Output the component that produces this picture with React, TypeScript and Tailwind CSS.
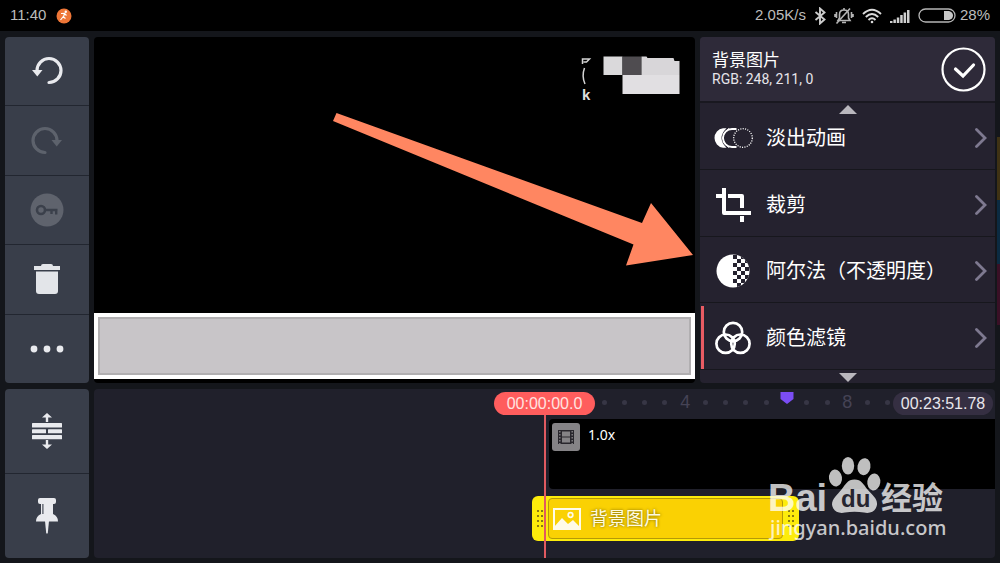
const effects = [
  { label: "淡出动画", icon: FadeIcon, active: false },
  { label: "裁剪", icon: CropIcon, active: false },
  { label: "阿尔法（不透明度）", icon: AlphaIcon, active: false },
  { label: "颜色滤镜", icon: FilterIcon, active: true },
];

const ticks = ["", "", "", "", "4", "", "", "", "", "marker", "", "", "8", "", ""];

const editTools = [
  { label: "Undo", icon: UndoIcon, disabled: false },
  { label: "Redo", icon: RedoIcon, disabled: true },
  { label: "Keyframe", icon: KeyIcon, disabled: true },
  { label: "Delete", icon: TrashIcon, disabled: false },
  { label: "More", icon: MoreIcon, disabled: false },
];

const trackTools = [
  { label: "Expand tracks", icon: ExpandIcon, disabled: false },
  { label: "Pin", icon: PinIcon, disabled: false },
];

function UndoIcon() {
  return (
    <svg width="32" height="32" viewBox="0 0 32 32" fill="none">
      <path d="M18 27.5A12 12 0 1 0 6 15.5" stroke="#e9eaee" strokeWidth="3.2" strokeLinecap="round" />
      <path d="M1 15h10.500l-5.200 6.500z" fill="#e9eaee" />
    </svg>
  );
}

function RedoIcon() {
  return (
    <svg width="32" height="32" viewBox="0 0 32 32" fill="none">
      <path d="M14 27.500A12 12 0 1 1 26 15.500" stroke="#5d626c" strokeWidth="3.200" strokeLinecap="round" />
      <path d="M31 15H20.500l5.200 6.500z" fill="#5d626c" />
    </svg>
  );
}

function KeyIcon() {
  return (
    <svg width="34" height="34" viewBox="0 0 34 34" fill="none">
      <circle cx="17" cy="17" r="16.5" fill="#5f636d" />
      <circle cx="11" cy="17" r="4" stroke="#3b404b" strokeWidth="2.6" />
      <path d="M15 17h12.500M26.200 17v4.500M21.500 17v4" stroke="#3b404b" strokeWidth="2.400" />
    </svg>
  );
}

function TrashIcon() {
  return (
    <svg width="32" height="32" viewBox="0 0 32 32" fill="#e3e5e9">
      <path d="M3 3h7q0-2 2-2h8q2 0 2 2h7v4H3z" />
      <path d="M5 8.500h22V28q0 3-3 3H8q-3 0-3-3z" />
    </svg>
  );
}

function MoreIcon() {
  return (
    <svg width="34" height="8" viewBox="0 0 34 8" fill="#e9eaee">
      <circle cx="4" cy="4" r="3.4" />
      <circle cx="17" cy="4" r="3.4" />
      <circle cx="30" cy="4" r="3.4" />
    </svg>
  );
}

function ExpandIcon() {
  return (
    <svg width="30" height="36" viewBox="0 0 30 36" fill="#e9eaee">
      <path d="M15 0l5 4.500h-3.800V9h-2.400V4.500H10zM15 36l5-4.500h-3.800V27h-2.400v4.500H10z" />
      <rect y="10" width="30" height="4.500" rx=".5" />
      <rect y="16.200" width="14" height="4" rx=".5" />
      <rect x="16" y="16.200" width="14" height="4" rx=".5" />
      <rect y="22" width="30" height="4.200" rx=".5" />
    </svg>
  );
}

function PinIcon() {
  return (
    <svg width="24" height="36" viewBox="0 0 24 36" fill="#e9eaee">
      <rect x="3" width="18" height="6" rx="2" />
      <path d="M6 5h12v11q5 2 5 7.500H1Q1 18 6 16z" />
      <path d="M10 23h4l-1.200 12q-.8 1.500-1.600 0z" />
      <path d="M7.900 6v10" stroke="#393e4a" strokeWidth="1.100" />
    </svg>
  );
}

function FadeIcon() {
  return (
    <svg width="40" height="22" viewBox="0 0 40 22" fill="none">
      <path d="M13.500 1.200H10A9.900 9.900 0 0 0 10 20.800H13.500Q3.500 11 13.500 1.200z" fill="#fff" />
      <path d="M16 1.200Q3.500 11 16 20.800" stroke="#fff" strokeWidth="1" />
      <path d="M23.500 2H19A9 9 0 0 0 19 20H23.500" stroke="#fff" strokeWidth="1.900" />
      <circle cx="30" cy="11" r="9.300" stroke="#fff" strokeWidth="1.300" strokeDasharray="1.100 1.300" />
    </svg>
  );
}

function CropIcon() {
  return (
    <svg width="36" height="36" viewBox="0 0 36 36" fill="none" stroke="#fff" strokeWidth="4">
      <path d="M9 1v25h27" strokeLinejoin="round" />
      <path d="M1 9h6M13 9h14v12M27 29v6" strokeLinejoin="round" />
    </svg>
  );
}

function AlphaIcon() {
  return (
    <svg width="34" height="34" viewBox="0 0 34 34">
      <clipPath id="disc">
        <circle cx="17" cy="17" r="16.500" />
      </clipPath>
      <g clipPath="url(#disc)">
        <rect width="34" height="34" fill="#fff" />
        <path
          d="M17 1h4v4h-4zM21 5h4v4h-4zM17 9h4v4h-4zM21 13h4v4h-4zM17 17h4v4h-4zM21 21h4v4h-4zM17 25h4v4h-4zM21 29h4v4h-4zM25 1h4v4h-4zM29 5h4v4h-4zM25 9h4v4h-4zM29 13h4v4h-4zM25 17h4v4h-4zM29 21h4v4h-4zM25 25h4v4h-4z"
          fill="#25222f"
        />
      </g>
    </svg>
  );
}

function FilterIcon() {
  return (
    <svg width="36" height="34" viewBox="0 0 36 34" fill="none" stroke="#fff" strokeWidth="2.700">
      <circle cx="18" cy="11" r="9.200" />
      <circle cx="10.600" cy="22.700" r="9.200" />
      <circle cx="25.400" cy="22.700" r="9.200" />
    </svg>
  );
}

type Tool = { label: string; icon: () => React.JSX.Element; disabled: boolean };

function Toolbar({ tools }: { tools: Tool[] }) {
  return (
    <div className="flex w-[84px] shrink-0 flex-col divide-y divide-[#222630] overflow-hidden rounded bg-[#393e4a]">
      {tools.map(({ label, icon: Icon, disabled }) => (
        <button
          key={label}
          aria-label={label}
          disabled={disabled}
          className="flex min-h-16 flex-1 items-center justify-center"
        >
          <Icon />
        </button>
      ))}
    </div>
  );
}

function StatusBar() {
  return (
    <header className="flex h-[31px] items-center justify-between bg-black px-[10px] text-[15px] text-[#bcbcbc]">
      <div className="flex items-center gap-[10px]">
        <span>11:40</span>
        <svg width="16" height="16" viewBox="0 0 16 16">
          <circle cx="8" cy="8" r="7.500" fill="#ee7637" />
          <circle cx="9.800" cy="3.800" r="1.200" fill="#fff" />
          <path d="M5 5.500l3.500-.2L7.500 9l2 1.500M8.500 5.500l2 2M7.300 8.500L4.500 12" stroke="#fff" strokeWidth="1.200" fill="none" />
        </svg>
      </div>
      <div className="flex items-center gap-2">
        <span>2.05K/s</span>
        <svg width="12" height="18" viewBox="0 0 12 18" fill="none" stroke="#cccccc" strokeWidth="1.900">
          <path d="M1.500 5l9 7.500L6 16.500v-15l4.500 4L1.500 13" />
        </svg>
        <svg width="20" height="18" viewBox="0 0 20 18" fill="none" stroke="#b5b5b5" strokeWidth="1.600">
          <path d="M4 13.500h12l-1.500-2.500V7.500Q14.500 3 10 3T5.500 7.500V11zM8 15.500h4M10 1v2M2.500 5v6M17.500 5v6M1 7v3M19 7v3" />
          <path d="M2.500 16.500L16 1.500" />
        </svg>
        <svg width="20" height="16" viewBox="0 0 20 16" fill="none" stroke="#dadada" strokeWidth="1.900">
          <path d="M1 6Q10-2.500 19 6M3.800 9Q10 3 16.200 9M6.500 12Q10 8.500 13.500 12" />
          <circle cx="10" cy="14" r="1.300" fill="#dadada" stroke="none" />
        </svg>
        <svg width="20" height="14" viewBox="0 0 20 14" fill="#d0d0d0">
          <path d="M0 12h2.500v2H0zM3.400 10.500h2.500V14H3.400zM6.800 8.500h2.500V14H6.800zM10.200 6h2.500v8h-2.500zM13.600 3.500h2.500V14h-2.500zM17 1h2.500v13H17z" />
        </svg>
        <div className="flex items-center gap-1">
          <svg width="38" height="15" viewBox="0 0 38 15">
            <rect x="1" y="1" width="36" height="13" rx="6.500" fill="none" stroke="#b5b5b5" strokeWidth="1.300" />
            <path d="M26 3h5q4 1 4 4.500t-4 4.500h-5z" fill="#c9c9c9" />
          </svg>
          <span>28%</span>
        </div>
      </div>
    </header>
  );
}

function Preview() {
  return (
    <section className="relative flex min-w-0 flex-1 flex-col justify-end overflow-hidden rounded bg-black pb-1">
      <div className="h-[66px] border-4 border-white bg-[#c8c5c8]">
        <div className="h-full border-2 border-[#b1afb1]" />
      </div>
      <svg className="absolute inset-0 h-full w-full" viewBox="0 0 601 346" preserveAspectRatio="none">
        <path d="M509.500 19.500h19v18.500h-19z" fill="#dad9db" />
        <path d="M528.500 19.500h19v18.500h-19z" fill="#4f4c50" />
        <path d="M547.500 19.500h5l1 1.500h26l1 3h5V38h-38z" fill="#d8d6d9" />
        <path d="M528.500 38h57v19h-57z" fill="#e1dfe2" />
        <path d="M488.500 27v-5h7l-3 3h-3M490.500 31q-3 8 .5 16" stroke="#d4d4d4" strokeWidth="1.500" fill="none" />
        <text x="488" y="63" fontSize="15" fontWeight="bold" fill="#ddd">
          k
        </text>
        <path d="M242.500 76L548 186l9-20 42 52-67 10.500 7.500-21L239 84z" fill="#ff8661" />
      </svg>
    </section>
  );
}

function EffectPanel() {
  return (
    <aside className="flex w-[295px] shrink-0 flex-col overflow-hidden rounded bg-[#25222f] text-white">
      <div className="flex h-[66px] items-center justify-between border-b-2 border-[#191820] bg-[#2e2a39] pl-3 pr-[9px]">
        <div>
          <h1 className="text-[17px] leading-5">背景图片</h1>
          <p className="font-['Roboto'] text-[14px] leading-4 text-[#e6e4ea]">RGB: 248, 211, 0</p>
        </div>
        <button aria-label="Done">
          <svg width="45" height="45" viewBox="0 0 45 45" fill="none" stroke="#fff">
            <circle cx="22.500" cy="22.500" r="21" strokeWidth="2.200" />
            <path d="M14.500 22l7.500 7L32.500 18" strokeWidth="3.200" strokeLinecap="round" />
          </svg>
        </button>
      </div>
      <ul className="relative flex flex-1 flex-col">
        <svg className="absolute left-1/2 top-[2px] -translate-x-1/2" width="18" height="9" viewBox="0 0 18 9">
          <path d="M9 0l9 9H0z" fill="#b9b7bd" />
        </svg>
        {effects.map(({ label, icon: Icon, active }) => (
          <li
            key={label}
            className={`flex flex-1 border-b border-b-[#17171d] ${active ? "bg-[linear-gradient(#e95c63,#e95c63)] bg-[length:3px_63px] bg-[position:1px_100%] bg-no-repeat" : ""}`}
          >
            <button className="flex w-full items-center pl-1 pr-2 pt-1 text-left text-[20px]">
              <span className="flex w-[62px] justify-center pr-1">
                <Icon />
              </span>
              <span className="flex-1 whitespace-nowrap">{label}</span>
              <svg width="12" height="20" viewBox="0 0 12 20" fill="none">
                <path d="M1.500 1.500L10 10l-8.500 8.500" stroke="#7e7990" strokeWidth="2.800" strokeLinecap="round" />
              </svg>
            </button>
          </li>
        ))}
      </ul>
      <div className="flex h-[13px] items-end justify-center">
        <svg width="18" height="10" viewBox="0 0 18 10">
          <path d="M0 0h18L9 9z" fill="#b9b7bd" />
        </svg>
      </div>
    </aside>
  );
}

function HandleDots() {
  return (
    <svg width="8" height="20" viewBox="0 0 8 20" fill="#8b7b10">
      <path d="M1 1h2v2H1zM1 6h2v2H1zM1 11h2v2H1zM1 16h2v2H1zM5 1h2v2H5zM5 6h2v2H5zM5 11h2v2H5zM5 16h2v2H5z" />
    </svg>
  );
}

function Timeline() {
  return (
    <section className="relative min-w-0 flex-1 overflow-hidden rounded bg-[#20202b]">
      <div className="ml-[500px] mr-[97px] flex h-[30px] items-center pb-1 text-[18px] text-[#454355]">
        {ticks.map((tick, i) => (
          <span key={i} className="flex flex-1 items-center justify-center">
            {tick === "" && <span className="size-[5px] rounded-full bg-[#373645]" />}
            {tick === "marker" && (
              <svg className="mb-2 shrink-0" width="14" height="12" viewBox="0 0 14 12">
                <path d="M.5 0h13v7L7 12 .5 7z" fill="#7b4df5" />
              </svg>
            )}
            {tick !== "marker" && tick}
          </span>
        ))}
      </div>

      <div className="ml-[455px] flex h-[70px] items-start gap-2 rounded-l bg-black px-[3px] py-1 text-white">
        <svg width="28" height="28" viewBox="0 0 28 28">
          <rect width="28" height="28" rx="3" fill="#858386" />
          <rect x="6" y="7" width="16" height="14" fill="#28262c" />
          <path d="M10 8.500h8v5h-8zM10 14.500h8v5h-8z" fill="#858386" />
          <path d="M7.800 8v13M20.200 8v13" stroke="#858386" strokeWidth="1.400" strokeDasharray="1.500 1.500" />
        </svg>
        <span className="font-['Noto_Sans'] text-[14px] leading-6">1.0x</span>
      </div>

      <div className="ml-[438px] mt-[7px] flex h-[45px] w-[267px] items-center rounded-md bg-[#fdec0b] py-[2px]">
        <span className="flex w-4 justify-center">
          <HandleDots />
        </span>
        <div className="flex h-full flex-1 items-center gap-[9px] rounded border border-[#b59a08] bg-[#fad103] pl-1 text-[18px] text-[#fffbe0]">
          <svg width="28" height="22" viewBox="0 0 28 22">
            <rect x="1" y="1" width="26" height="20" fill="none" stroke="#fffbe8" strokeWidth="2" />
            <path d="M1 19l8-9 6 6 5-4 7 7v2H1z" fill="#fffbe8" />
            <circle cx="17.500" cy="7" r="2.300" fill="none" stroke="#fffbe8" strokeWidth="1.700" />
          </svg>
          <span className="pt-[2px] [text-shadow:0_0_3px_#6b5a00]">背景图片</span>
        </div>
        <span className="flex w-4 justify-center">
          <HandleDots />
        </span>
      </div>

      <div className="absolute inset-y-0 left-[400px] flex w-[101px] flex-col items-center pt-[3px]">
        <time className="w-full rounded-full bg-[#ff5d5d] text-center text-[16px] leading-[23px] text-[#ffe3e0]">
          00:00:00.0
        </time>
        <span className="w-[2px] flex-1 bg-[#e05a60]" />
      </div>
      <time className="absolute right-[2px] top-[3px] w-[100px] rounded-full bg-[#352f42] text-center text-[16px] leading-[23px] text-[#e8e6ec]">
        00:23:51.78
      </time>
    </section>
  );
}

function Watermark() {
  return (
    <svg
      className="absolute bottom-[18px] right-12"
      width="184"
      height="90"
      viewBox="0 0 184 90"
      fill="#fff"
      fillOpacity=".75"
    >
      <text x="0" y="56" fontSize="38" fontWeight="bold">
        Bai
      </text>
      <ellipse cx="67.500" cy="23" rx="6.500" ry="8.500" transform="rotate(-8 67.500 23)" />
      <ellipse cx="80" cy="10.700" rx="6.200" ry="8.800" />
      <ellipse cx="96" cy="11.700" rx="6.500" ry="8.500" transform="rotate(10 96 11.700)" />
      <ellipse cx="105.800" cy="27" rx="6.500" ry="8.500" transform="rotate(8 105.800 27)" />
      <path d="M86.500 24.500c7 0 9 5 13 10 5 6 10 9 9.500 15-1 7-7 9.500-13 8-6-1-13-1-19 0-6 1.500-12-1-13-8 0-6 5-9 9.500-15 4-5 6-10 13-10z" />
      <text x="73" y="52" fontSize="24" fontWeight="bold" fill="#262530" fillOpacity="1">
        du
      </text>
      <text x="113" y="54" fontSize="31" fontWeight="bold">
        经验
      </text>
      <text x="2" y="80" fontSize="20" fontWeight="500" className="font-['Noto_Sans']">
        jingyan.baidu.com
      </text>
    </svg>
  );
}

export default function App() {
  return (
    <main className="relative flex min-h-screen flex-col bg-[#14161b] font-['Liberation_Sans','Noto_Sans_CJK_SC',sans-serif]">
      <StatusBar />
      <div className="flex flex-1 flex-col gap-[6px] px-[5px] pb-[5px] pt-[6px]">
        <div className="flex flex-1 gap-[5px]">
          <Toolbar tools={editTools} />
          <Preview />
          <EffectPanel />
        </div>
        <div className="flex h-[169px] gap-[5px]">
          <Toolbar tools={trackTools} />
          <Timeline />
        </div>
      </div>
      <div className="absolute right-0 top-[137px] flex flex-col">
        <span className="h-[63px] w-[3px] bg-[#3f3214]" />
        <span className="h-16 w-[3px] bg-[#0b2b42]" />
        <span className="h-[61px] w-[3px] bg-[#3a1026]" />
      </div>
      <Watermark />
    </main>
  );
}
